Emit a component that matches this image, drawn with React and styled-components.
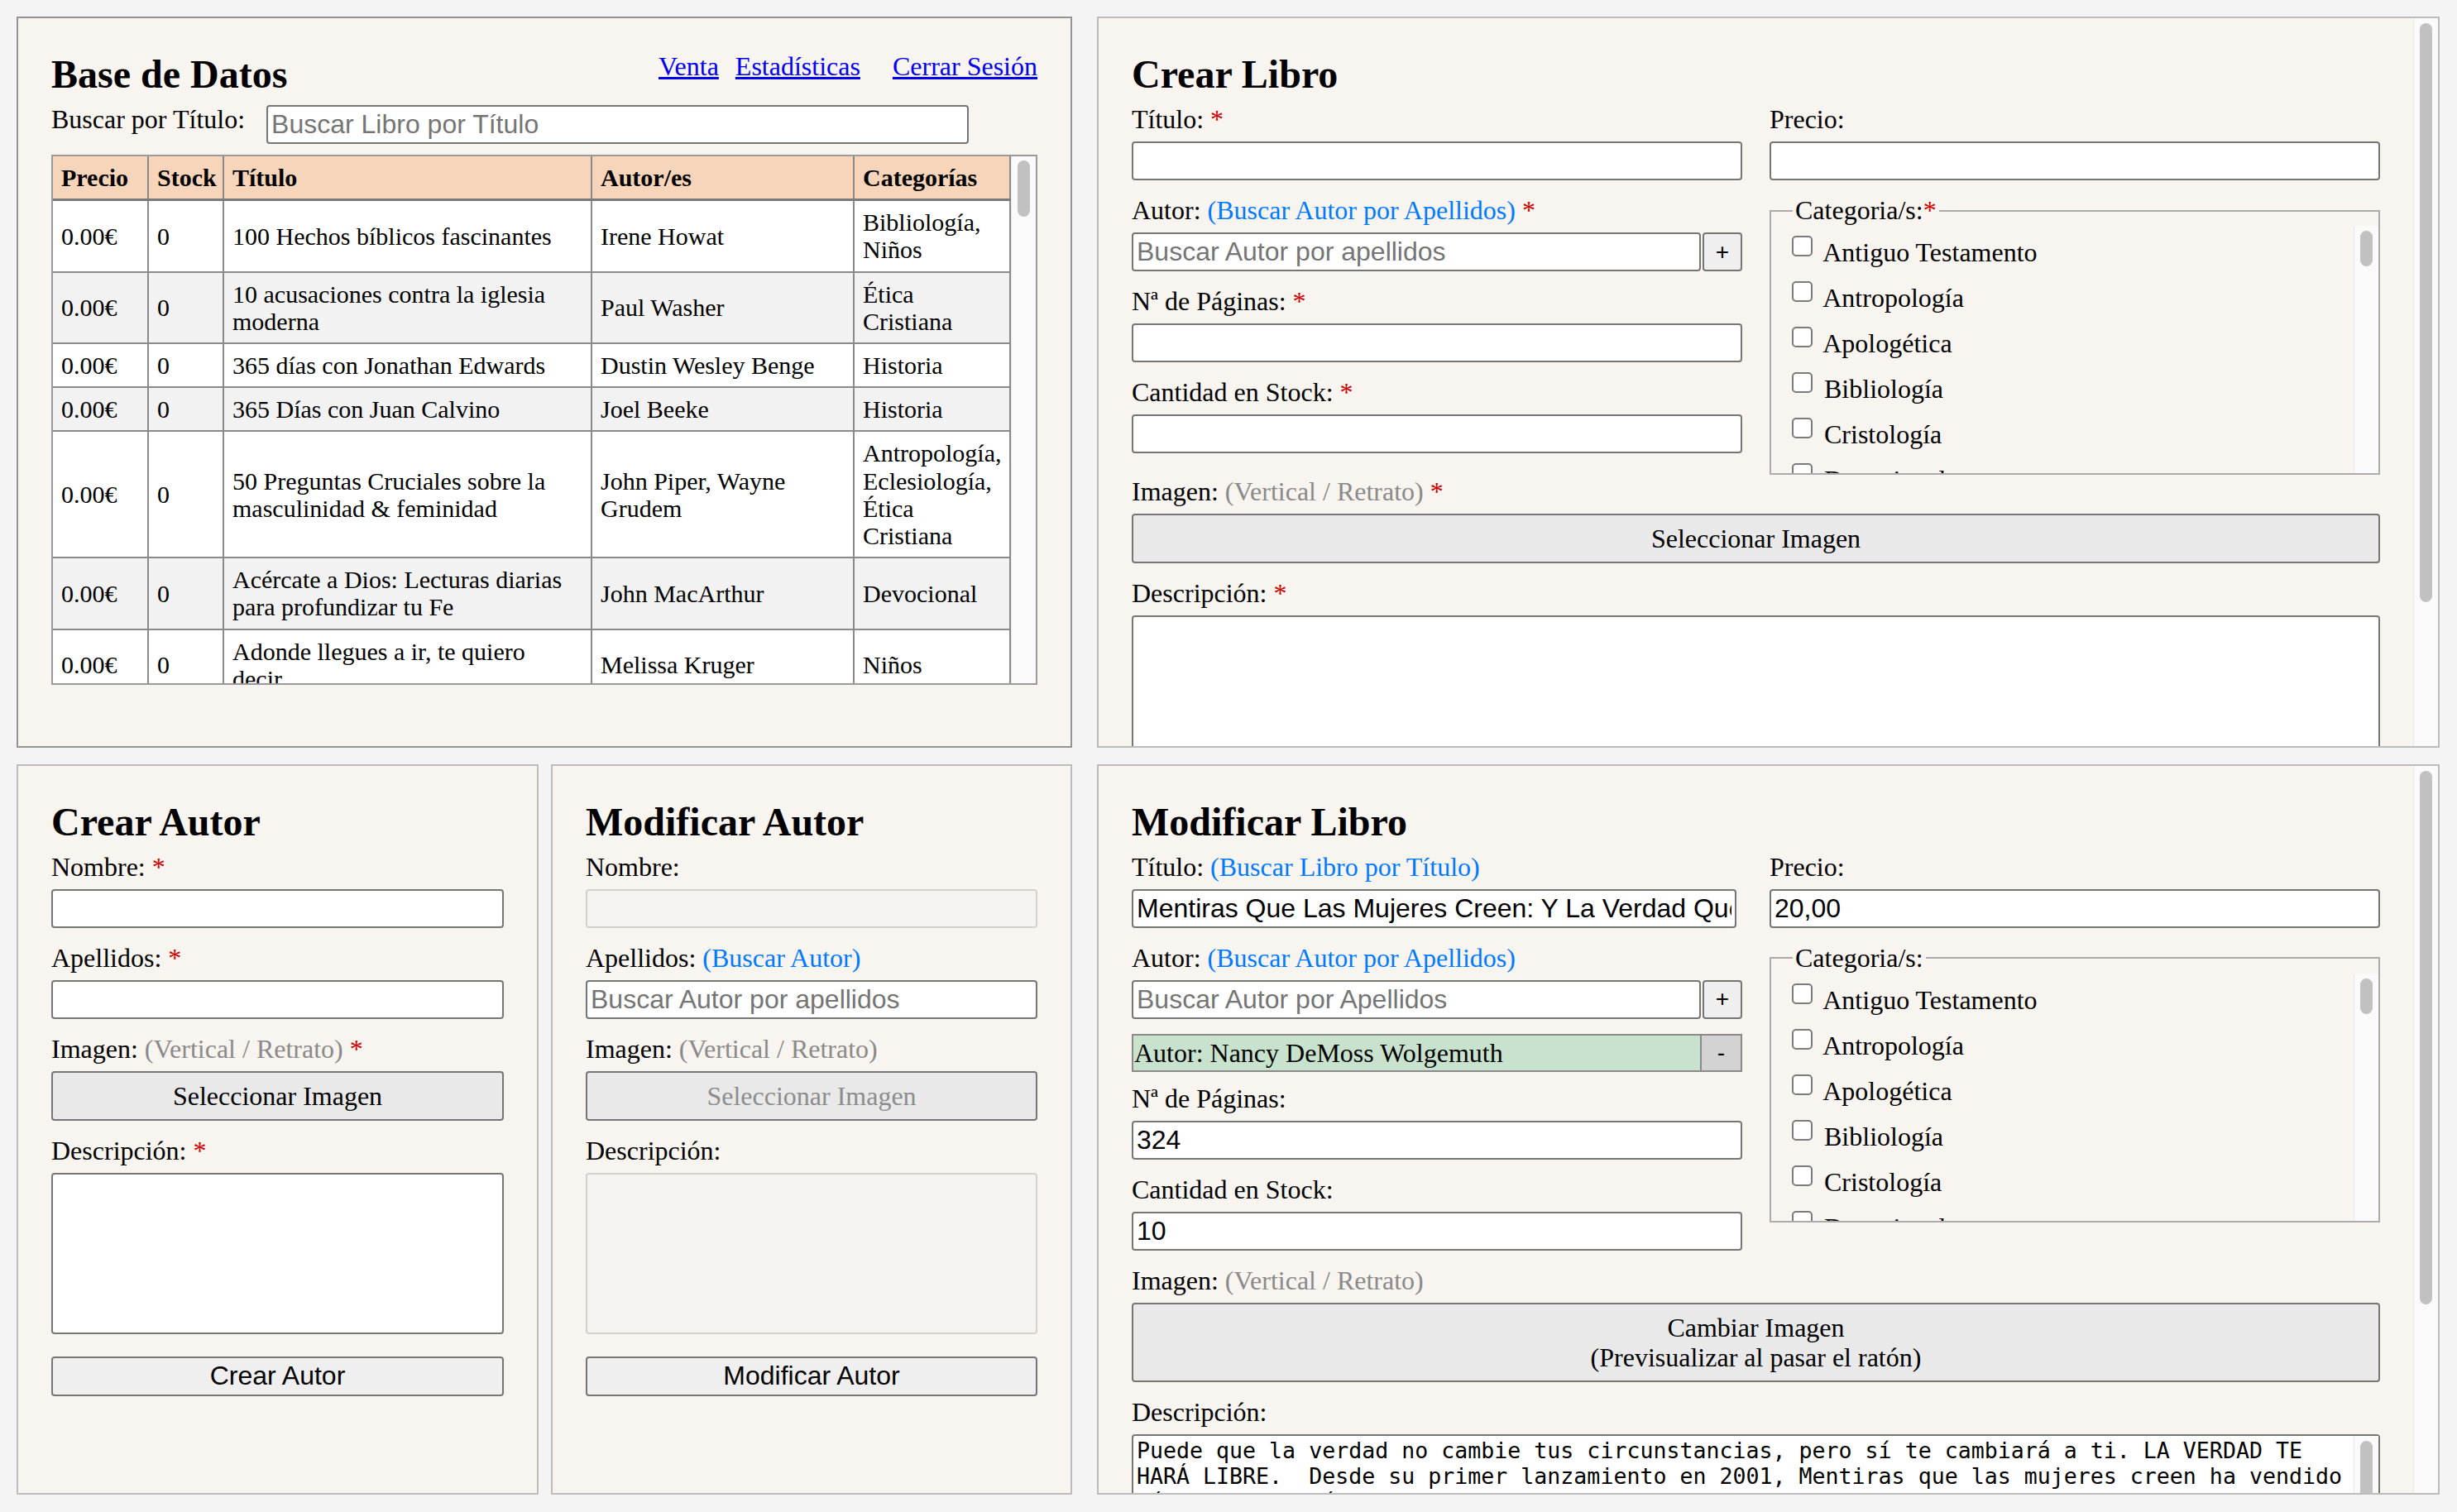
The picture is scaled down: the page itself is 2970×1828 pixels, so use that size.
import React from 'react';
import styled, { createGlobalStyle } from 'styled-components';

const serif = '"Liberation Serif", "Times New Roman", Times, serif';
const sans = '"Liberation Sans", Arial, Helvetica, sans-serif';
const mono = '"DejaVu Sans Mono", Menlo, monospace';

const GlobalStyle = createGlobalStyle`
  html, body { margin: 0; padding: 0; }
  body {
    background: #f4f4f4;
    font-family: ${serif};
    font-size: 32px;
    color: #000;
  }
  * { box-sizing: border-box; }
`;

const Page = styled.main`
  display: grid;
  grid-template-columns: 1276fr 1623fr;
  grid-template-rows: 1fr 1fr;
  gap: 20px 30px;
  height: 100vh;
  padding: 20px 21px 21px 20px;
`;

const AuthorRow = styled.div`
  display: grid;
  grid-template-columns: 631fr 630fr;
  gap: 15px;
  min-height: 0;
`;

const Panel = styled.section`
  position: relative;
  background: #f8f4ef;
  border: 2px solid ${(p) => (p.$dark ? '#939393' : '#bcbcbc')};
  padding: 40px ${(p) => (p.$scroll ? '70px' : '40px')} 40px 40px;
  min-height: 0;
  min-width: 0;
  overflow: hidden;
`;

/* scrollbar drawn over the right edge of a scrolled box */
const Track = styled.div`
  position: absolute;
  top: ${(p) => p.$inset || 0}px;
  bottom: ${(p) => p.$inset || 0}px;
  right: ${(p) => p.$inset || 0}px;
  width: 30px;
  background: #fafafa;
  border-left: 1px solid #e8e8e8;
`;

const Thumb = styled.div`
  position: absolute;
  left: 7px;
  right: 7px;
  top: ${(p) => p.$top}px;
  height: ${(p) => p.$size}px;
  background: #c1c1c1;
  border-radius: 8px;
`;

function ScrollBar({ top = 6, size, inset }) {
  return (
    <Track $inset={inset}>
      <Thumb $top={top} $size={size} />
    </Track>
  );
}

const HeaderRow = styled.div`
  display: flex;
  justify-content: space-between;
  align-items: flex-start;
`;

const Title = styled.h2`
  margin: 0 0 9px;
  font-size: 48px;
  line-height: 55px;
  font-weight: bold;
`;

const Nav = styled.nav`
  display: flex;
  gap: 20px;
  line-height: 37px;
`;

const NavLink = styled.a`
  color: #0000ee;
  text-decoration: underline;
  margin-left: ${(p) => (p.$apart ? '19px' : '0')};
`;

const SearchRow = styled.div`
  display: flex;
  align-items: flex-start;
  gap: 26px;
`;

const Label = styled.label`
  display: block;
  line-height: 37px;
  white-space: nowrap;
`;

const Req = styled.span`
  color: #cc0000;
`;

const Hint = styled.span`
  color: #007bff;
`;

const Muted = styled.span`
  color: #8a8a8a;
`;

const Field = styled.div`
  display: flex;
  flex-direction: column;
  gap: 8px;
  margin-bottom: 18px;
`;

const Columns = styled.div`
  display: grid;
  grid-template-columns: 1fr 1fr;
  column-gap: 33px;
`;

const Column = styled.div`
  min-width: 0;
`;

const TextInput = styled.input`
  display: block;
  width: ${(p) => (p.$narrow ? 'calc(100% - 7px)' : '100%')};
  height: 47px;
  margin: ${(p) => (p.$nudge ? '1px 0 0' : '0')};
  padding: 2px 4px;
  font-family: ${sans};
  font-size: 32px;
  color: #000;
  background: ${(p) => (p.disabled ? '#f5f4f1' : '#fff')};
  border: 2px solid ${(p) => (p.disabled ? '#d4d1cd' : '#767676')};
  border-radius: 4px;
  &::placeholder { color: #757575; }
  &:focus { outline: none; }
`;

const SearchInput = styled(TextInput)`
  width: 849px;
`;

const SearchGroup = styled.div`
  display: flex;
  gap: 2px;
  & > input { flex: 1; min-width: 0; }
`;

const AddButton = styled.button`
  width: 48px;
  height: 47px;
  margin: 0;
  padding: 0;
  font-family: ${sans};
  font-size: 28px;
  color: #000;
  background: #efefef;
  border: 2px solid #767676;
  border-radius: 4px;
`;

const Selected = styled.div`
  display: flex;
  height: 46px;
  margin-bottom: 14px;
  background: #c8e2cd;
  border: 2px solid #8a8a8a;
`;

const SelectedName = styled.span`
  flex: 1;
  padding-left: 1px;
  line-height: 42px;
  white-space: nowrap;
  overflow: hidden;
`;

const RemoveButton = styled.button`
  width: 49px;
  margin: 0;
  padding: 0;
  font-family: ${sans};
  font-size: 28px;
  color: #000;
  background: #d3d3d3;
  border: none;
  border-left: 2px solid #8a8a8a;
`;

const Fieldset = styled.fieldset`
  margin: 0 0 2px;
  padding: 0;
  min-width: 0;
  border: 2px solid #ababab;
`;

const Legend = styled.legend`
  margin-left: 26px;
  padding: 0 3px;
  line-height: 37px;
`;

const CheckList = styled.div`
  position: relative;
  height: 299px;
  overflow: hidden;
  padding: 5px 30px 0 17px;
`;

const CheckItem = styled.label`
  display: block;
  line-height: 55px;
  white-space: nowrap;
`;

const Checkbox = styled.input`
  appearance: none;
  -webkit-appearance: none;
  display: inline-block;
  width: 25px;
  height: 25px;
  margin: 6px 6px 6px 8px;
  vertical-align: baseline;
  background: #fff;
  border: 2px solid #7b7b7b;
  border-radius: 5px;
`;

const ImageButton = styled.button`
  display: block;
  width: 100%;
  margin: 0;
  padding: 10px;
  font-family: ${serif};
  font-size: 32px;
  line-height: 36px;
  color: ${(p) => (p.$muted ? '#8c8c8c' : '#000')};
  background: #e9e9e9;
  border: 2px solid #767676;
  border-radius: 4px;
`;

const SubmitButton = styled.button`
  display: block;
  width: 100%;
  height: 48px;
  margin: 27px 0 0;
  padding: 0;
  font-family: ${sans};
  font-size: 32px;
  color: #000;
  background: #efefef;
  border: 2px solid #767676;
  border-radius: 4px;
`;

const AreaBox = styled.div`
  position: relative;
`;

const TextArea = styled.textarea`
  display: block;
  width: 100%;
  height: ${(p) => p.$h}px;
  margin: 0;
  padding: 2px ${(p) => (p.$scroll ? '34px' : '4px')} 2px 4px;
  font-family: ${mono};
  font-size: 26.6px;
  line-height: 31px;
  color: #000;
  background: ${(p) => (p.disabled ? '#f5f4f1' : '#fff')};
  border: 2px solid ${(p) => (p.disabled ? '#d4d1cd' : '#767676')};
  border-radius: 4px;
  resize: none;
  overflow: hidden;
  &:focus { outline: none; }
`;

const TableWrap = styled.div`
  position: relative;
  margin-top: 13px;
  height: 641px;
  overflow: hidden;
  padding-right: 30px;
  border: 2px solid #9a9a9a;
  background: #fff;
`;

const Table = styled.table`
  width: 100%;
  border-collapse: collapse;
  table-layout: fixed;
  font-size: 30px;
  line-height: 33.2px;
`;

const Th = styled.th`
  width: ${(p) => (p.$w ? `${p.$w}px` : 'auto')};
  padding: 9px 10px;
  text-align: left;
  font-weight: bold;
  background: #f6d5ba;
  border: 2px solid #8a8a8a;
  border-top: none;
  border-bottom: 3px solid #7a7a7a;
  &:first-child { border-left: none; }
`;

const Tr = styled.tr`
  background: ${(p) => (p.$alt ? '#f2f2f2' : '#fff')};
`;

const Td = styled.td`
  padding: 9px 10px;
  vertical-align: middle;
  border: 2px solid #8a8a8a;
  &:first-child { border-left: none; }
  &:nth-child(3) { padding-right: 30px; }
`;

const books = [
  ['100 Hechos bíblicos fascinantes', 'Irene Howat', 'Bibliología, Niños'],
  ['10 acusaciones contra la iglesia moderna', 'Paul Washer', 'Ética Cristiana'],
  ['365 días con Jonathan Edwards', 'Dustin Wesley Benge', 'Historia'],
  ['365 Días con Juan Calvino', 'Joel Beeke', 'Historia'],
  ['50 Preguntas Cruciales sobre la masculinidad & feminidad', 'John Piper, Wayne Grudem', 'Antropología, Eclesiología, Ética Cristiana'],
  ['Acércate a Dios: Lecturas diarias para profundizar tu Fe', 'John MacArthur', 'Devocional'],
  ['Adonde llegues a ir, te quiero decir', 'Melissa Kruger', 'Niños'],
];

const categories = [
  'Antiguo Testamento', 'Antropología', 'Apologética', 'Bibliología', 'Cristología', 'Devocional',
];

const description =
  'Puede que la verdad no cambie tus circunstancias, pero sí te cambiará a ti. LA VERDAD TE HARÁ LIBRE.  Desde su primer lanzamiento en 2001, Mentiras que las mujeres creen ha vendido más de un millón de copias en todo el mundo.';

function Categories({ required }) {
  return (
    <Fieldset>
      <Legend>Categoria/s:{required && <Req>*</Req>}</Legend>
      <CheckList>
        {categories.map((c) => (
          <CheckItem key={c}>
            <Checkbox type="checkbox" /> {c}
          </CheckItem>
        ))}
        <ScrollBar size={43} />
      </CheckList>
    </Fieldset>
  );
}

function BooksPanel() {
  return (
    <Panel $dark>
      <HeaderRow>
        <Title>Base de Datos</Title>
        <Nav>
          <NavLink href="#venta">Venta</NavLink>
          <NavLink href="#estadisticas">Estadísticas</NavLink>
          <NavLink href="#salir" $apart>Cerrar Sesión</NavLink>
        </Nav>
      </HeaderRow>
      <SearchRow>
        <Label>Buscar por Título:</Label>
        <SearchInput $nudge placeholder="Buscar Libro por Título" />
      </SearchRow>
      <TableWrap>
        <Table>
          <thead>
            <tr>
              <Th $w={115}>Precio</Th>
              <Th $w={91}>Stock</Th>
              <Th $w={445}>Título</Th>
              <Th $w={317}>Autor/es</Th>
              <Th>Categorías</Th>
            </tr>
          </thead>
          <tbody>
            {books.map(([title, author, cats], i) => (
              <Tr key={title} $alt={i % 2 === 1}>
                <Td>0.00€</Td>
                <Td>0</Td>
                <Td>{title}</Td>
                <Td>{author}</Td>
                <Td>{cats}</Td>
              </Tr>
            ))}
          </tbody>
        </Table>
        <ScrollBar top={5} size={68} />
      </TableWrap>
    </Panel>
  );
}

function CreateBookPanel() {
  return (
    <Panel $scroll>
      <Title>Crear Libro</Title>
      <Columns>
        <Column>
          <Field>
            <Label>Título: <Req>*</Req></Label>
            <TextInput />
          </Field>
          <Field>
            <Label>Autor: <Hint>(Buscar Autor por Apellidos)</Hint> <Req>*</Req></Label>
            <SearchGroup>
              <TextInput placeholder="Buscar Autor por apellidos" />
              <AddButton>+</AddButton>
            </SearchGroup>
          </Field>
          <Field>
            <Label>Nª de Páginas: <Req>*</Req></Label>
            <TextInput />
          </Field>
          <Field>
            <Label>Cantidad en Stock: <Req>*</Req></Label>
            <TextInput />
          </Field>
        </Column>
        <Column>
          <Field>
            <Label>Precio:</Label>
            <TextInput />
          </Field>
          <Categories required />
        </Column>
      </Columns>
      <Field>
        <Label>Imagen: <Muted>(Vertical / Retrato)</Muted> <Req>*</Req></Label>
        <ImageButton>Seleccionar Imagen</ImageButton>
      </Field>
      <Field>
        <Label>Descripción: <Req>*</Req></Label>
        <TextArea $h={320} />
      </Field>
      <ScrollBar size={700} />
    </Panel>
  );
}

function CreateAuthorPanel() {
  return (
    <Panel>
      <Title>Crear Autor</Title>
      <Field>
        <Label>Nombre: <Req>*</Req></Label>
        <TextInput />
      </Field>
      <Field>
        <Label>Apellidos: <Req>*</Req></Label>
        <TextInput />
      </Field>
      <Field>
        <Label>Imagen: <Muted>(Vertical / Retrato)</Muted> <Req>*</Req></Label>
        <ImageButton>Seleccionar Imagen</ImageButton>
      </Field>
      <Field>
        <Label>Descripción: <Req>*</Req></Label>
        <TextArea $h={195} />
      </Field>
      <SubmitButton>Crear Autor</SubmitButton>
    </Panel>
  );
}

function EditAuthorPanel() {
  return (
    <Panel>
      <Title>Modificar Autor</Title>
      <Field>
        <Label>Nombre:</Label>
        <TextInput disabled />
      </Field>
      <Field>
        <Label>Apellidos: <Hint>(Buscar Autor)</Hint></Label>
        <TextInput placeholder="Buscar Autor por apellidos" />
      </Field>
      <Field>
        <Label>Imagen: <Muted>(Vertical / Retrato)</Muted></Label>
        <ImageButton $muted>Seleccionar Imagen</ImageButton>
      </Field>
      <Field>
        <Label>Descripción:</Label>
        <TextArea $h={195} disabled />
      </Field>
      <SubmitButton>Modificar Autor</SubmitButton>
    </Panel>
  );
}

function EditBookPanel() {
  return (
    <Panel $scroll>
      <Title>Modificar Libro</Title>
      <Columns>
        <Column>
          <Field>
            <Label>Título: <Hint>(Buscar Libro por Título)</Hint></Label>
            <TextInput $narrow defaultValue="Mentiras Que Las Mujeres Creen: Y La Verdad Que Las Hace Libres" />
          </Field>
          <Field>
            <Label>Autor: <Hint>(Buscar Autor por Apellidos)</Hint></Label>
            <SearchGroup>
              <TextInput placeholder="Buscar Autor por Apellidos" />
              <AddButton>+</AddButton>
            </SearchGroup>
          </Field>
          <Selected>
            <SelectedName>Autor: Nancy DeMoss Wolgemuth</SelectedName>
            <RemoveButton>-</RemoveButton>
          </Selected>
          <Field>
            <Label>Nª de Páginas:</Label>
            <TextInput defaultValue="324" />
          </Field>
          <Field>
            <Label>Cantidad en Stock:</Label>
            <TextInput defaultValue="10" />
          </Field>
        </Column>
        <Column>
          <Field>
            <Label>Precio:</Label>
            <TextInput defaultValue="20,00" />
          </Field>
          <Categories />
        </Column>
      </Columns>
      <Field>
        <Label>Imagen: <Muted>(Vertical / Retrato)</Muted></Label>
        <ImageButton>
          Cambiar Imagen
          <br />
          (Previsualizar al pasar el ratón)
        </ImageButton>
      </Field>
      <Field>
        <Label>Descripción:</Label>
        <AreaBox>
          <TextArea $h={320} $scroll defaultValue={description} />
          <ScrollBar size={150} inset={2} />
        </AreaBox>
      </Field>
      <ScrollBar size={645} />
    </Panel>
  );
}

export default function App() {
  return (
    <>
      <GlobalStyle />
      <Page>
        <BooksPanel />
        <CreateBookPanel />
        <AuthorRow>
          <CreateAuthorPanel />
          <EditAuthorPanel />
        </AuthorRow>
        <EditBookPanel />
      </Page>
    </>
  );
}
